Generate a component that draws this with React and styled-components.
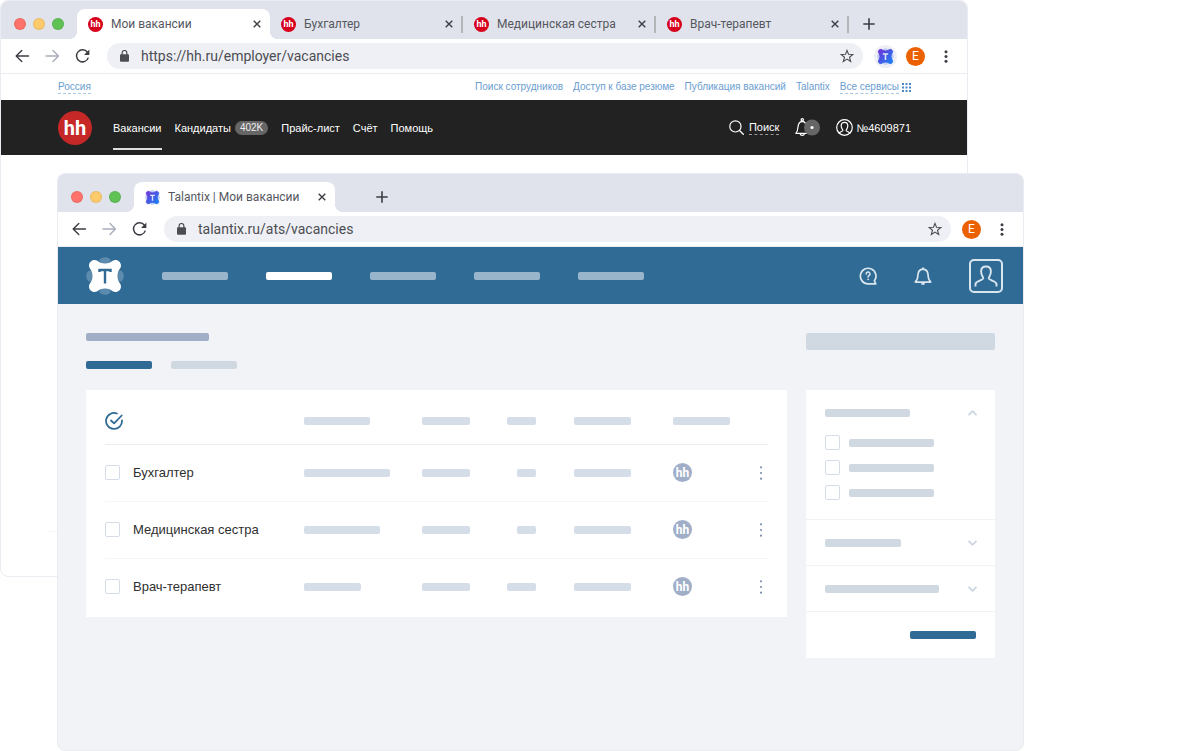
import React from "react";
import styled, { createGlobalStyle, css } from "styled-components";

const GlobalStyle = createGlobalStyle`
  *, *::before, *::after { box-sizing: border-box; }
  body { margin: 0; background: #fff; font-family: Roboto, "Liberation Sans", sans-serif; }
  button { border: 0; padding: 0; background: none; font: inherit; color: inherit; cursor: pointer; }
  a { color: inherit; text-decoration: none; }
  svg { display: block; }
`;

const Desktop = styled.div`
  display: grid;
  grid-template-columns: minmax(0, 1fr);
  min-height: 100vh;
`;

const Window = styled.section`
  grid-area: 1 / 1;
  display: flex;
  flex-direction: column;
  border: 1px solid #ebecf1;
  border-radius: 8px;
  background: ${(p) => p.$tint || "#fff"};
  overflow: hidden;
`;

const BackWindow = styled(Window)`
  align-self: start;
  margin-right: 232px;
  min-height: 577px;
`;

const FrontWindow = styled(Window)`
  margin: 173px 176px 0 57px;
`;

/* Browser chrome */

const TabStrip = styled.div`
  display: flex;
  align-items: flex-end;
  height: 38px;
  padding-left: 13px;
  background: #e0e3eb;
`;

const Lights = styled.div`
  display: flex;
  flex: none;
  align-items: center;
  gap: 7px;
  height: 30px;
  margin-right: 13px;
`;

const Light = styled.button`
  width: 12px;
  height: 12px;
  border-radius: 50%;
  border: 1px solid rgba(0, 0, 0, 0.08);
  background: ${(p) => p.$color};
`;

const Tab = styled.div`
  position: relative;
  display: flex;
  align-items: center;
  flex: 0 1 ${(p) => p.$width || 193}px;
  min-width: 0;
  height: 30px;
  padding-left: 11px;
  color: #55585f;
  ${(p) =>
    p.$active &&
    css`
      padding-right: 9px;
      border-radius: 8px 8px 0 0;
      background: #fff;
      &::before,
      &::after {
        content: "";
        position: absolute;
        bottom: 0;
        width: 8px;
        height: 8px;
      }
      &::before {
        right: 100%;
        background: radial-gradient(circle at 0 0, transparent 8px, #fff 8px);
      }
      &::after {
        left: 100%;
        background: radial-gradient(circle at 100% 0, transparent 8px, #fff 8px);
      }
    `}
`;

const TabTitle = styled.button`
  flex: 1;
  min-width: 0;
  margin-left: 8px;
  overflow: hidden;
  text-align: left;
  font-size: 12px;
  line-height: 18px;
  white-space: nowrap;
`;

const TabDivider = styled.span`
  flex: none;
  width: 2px;
  height: 17px;
  margin-left: 8px;
  background: #b4b5b9;
`;

const NewTab = styled.button`
  display: flex;
  align-items: center;
  height: 30px;
  margin-left: ${(p) => p.$gap}px;
`;

const Toolbar = styled.div`
  display: flex;
  align-items: center;
  height: 35px;
  padding: 0 19px 0 14px;
  border-bottom: 1px solid #ebecf0;
  background: #fff;
`;

const NavButtons = styled.div`
  display: flex;
  gap: 15px;
  margin-right: 17px;
`;

const Address = styled.div`
  display: flex;
  flex: 1;
  align-items: center;
  min-width: 0;
  height: 26px;
  padding: 0 9px 0 13px;
  border-radius: 13px;
  background: #eff0f5;
`;

const AddressInput = styled.input`
  flex: 1;
  min-width: 0;
  padding: 0;
  margin-left: 12px;
  border: 0;
  outline: 0;
  background: none;
  color: #4b4d52;
  font: 14px/20px Roboto, "Liberation Sans", sans-serif;
`;

const Actions = styled.div`
  display: flex;
  align-items: center;
  gap: 9px;
  margin-left: 11px;
`;

const Extension = styled.button`
  display: flex;
  align-items: center;
  justify-content: center;
  width: 23px;
  height: 23px;
  border-radius: 50%;
  background: #eff0f5;
`;

const Avatar = styled.button`
  width: 19px;
  height: 19px;
  border-radius: 50%;
  background: #eb6100;
  color: #fff;
  font-size: 12px;
  line-height: 19px;
  text-align: center;
`;

const MoreButton = styled.button`
  margin-left: 10px;
`;

const HhBadge = styled.span`
  display: flex;
  flex: none;
  align-items: center;
  justify-content: center;
  width: ${(p) => p.$size}px;
  height: ${(p) => p.$size}px;
  border-radius: 50%;
  background: ${(p) => p.$color};
  color: #fff;
  font-family: Roboto, "Liberation Sans", sans-serif;
  font-weight: 700;
  font-size: ${(p) => p.$font}px;
  line-height: 1;
`;

/* hh.ru page */

const ServiceLinks = styled.nav`
  display: flex;
  align-items: center;
  gap: 10px;
  height: 26px;
  padding: 0 56px 0 57px;
  color: #6b9dd0;
  font-family: "Liberation Sans", Arial, sans-serif;
  font-size: 10px;
  line-height: 12px;
`;

const ServiceLink = styled.a`
  white-space: nowrap;
  ${(p) => p.$dashed && "border-bottom: 1px dashed #a9c8e6;"}
  ${(p) => p.$first && "margin-right: auto;"}
`;

const AllServices = styled.span`
  display: flex;
  align-items: center;
  gap: 3px;
`;

const HhHeader = styled.header`
  display: flex;
  align-items: center;
  height: 55px;
  padding: 0 56px 0 57px;
  background: #222;
  color: #fff;
  font-family: "Liberation Sans", Arial, sans-serif;
  font-size: 11px;
  line-height: 14px;
`;

const HhNav = styled.nav`
  display: flex;
  align-items: stretch;
  gap: 13px;
  height: 45px;
  margin-left: 21px;
`;

const HhNavLink = styled.a`
  display: flex;
  align-items: center;
  gap: 4px;
  border: solid transparent;
  border-width: 2px 0;
  white-space: nowrap;
  ${(p) => p.$active && "border-bottom-color: #ddd;"}
`;

const Count = styled.span`
  padding: 0 5px;
  border-radius: 7px;
  background: #666;
  color: #eee;
  font-size: 10px;
`;

const HhTools = styled.div`
  display: flex;
  align-items: center;
  gap: 16px;
  margin-left: auto;
`;

const HhTool = styled.a`
  display: flex;
  align-items: center;
  gap: ${(p) => p.$gap}px;
  white-space: nowrap;
`;

const Dashed = styled.span`
  border-bottom: 1px dashed #999;
`;

const HhBody = styled.main`
  display: flex;
  flex: 1;
  flex-direction: column;
  justify-content: flex-end;
  padding: 0 48px;
`;

const HhFooter = styled.footer`
  height: 45px;
  border-top: 1px solid #f3f3f5;
`;

/* Talantix page */

const TxHeader = styled.header`
  display: flex;
  align-items: center;
  height: 57px;
  padding: 0 20px 0 28px;
  background: #306b95;
  color: #d9e6ef;
`;

const TxNav = styled.nav`
  display: flex;
  gap: 38px;
  margin-left: 38px;
`;

const TxTools = styled.div`
  display: flex;
  align-items: center;
  gap: 37px;
  margin-left: auto;
`;

const UserBox = styled.button`
  display: flex;
  align-items: center;
  justify-content: center;
  width: 34px;
  height: 34px;
  border: 2px solid #d9e6ef;
  border-radius: 5px;
`;

const Bar = styled.span`
  display: block;
  width: ${(p) => p.$w}px;
  max-width: 100%;
  height: 8px;
  border-radius: 2px;
  background: ${(p) => p.$color || "#d0d8e2"};
`;

const TxBody = styled.main`
  display: flex;
  gap: 19px;
  padding: 29px 28px;
`;

const MainColumn = styled.div`
  flex: 1;
  min-width: 0;
`;

const SubTabs = styled.nav`
  display: flex;
  gap: 19px;
  margin: 20px 0 21px;
`;

const TableCard = styled.div`
  padding: 0 19px 2px;
  background: #fff;
`;

const Table = styled.table`
  width: 100%;
  table-layout: fixed;
  border-collapse: collapse;
  color: #303030;
  font-family: "Liberation Sans", Arial, sans-serif;
  font-size: 13px;
  line-height: 18px;
  text-align: left;
`;

const HeadRow = styled.tr`
  height: 54px;
  border-bottom: 1px solid #eaecf1;
  th { padding: 9px 0 0; }
`;

const CheckAllButton = styled.button`
  display: block;
`;

const Row = styled.tr`
  height: 57px;
  & + & { border-top: 1px solid #f4f5f8; }
  td, th { padding: 0; font-weight: 400; white-space: nowrap; }
`;

const RightBar = styled(Bar)`
  margin-left: auto;
  margin-right: 38px;
`;

const Checkbox = styled.input`
  display: block;
  appearance: none;
  width: 15px;
  height: 15px;
  margin: 0;
  border: 1px solid #d5dce8;
  border-radius: 2px;
  background: #fff;
`;

const RowMenu = styled.button`
  display: block;
  margin: 0 auto;
`;

const SideColumn = styled.aside`
  flex: none;
  width: 189px;
`;

const SearchStub = styled.div`
  height: 17px;
  margin-bottom: 40px;
  border-radius: 2px;
  background: #d0d8e2;
`;

const Filters = styled.div`
  background: #fff;
`;

const FilterGroup = styled.section`
  & + & { border-top: 1px solid #f1f3f6; }
`;

const FilterHead = styled.button`
  display: flex;
  align-items: center;
  justify-content: space-between;
  width: 100%;
  height: 45px;
  padding: 0 18px 0 19px;
`;

const Options = styled.div`
  display: grid;
  gap: 10px;
  padding: 0 19px 19px;
`;

const Option = styled.label`
  display: flex;
  align-items: center;
  gap: 9px;
`;

const FilterFooter = styled(FilterGroup)`
  display: flex;
  align-items: center;
  justify-content: flex-end;
  height: 47px;
  padding: 0 19px;
  border-top: 1px solid #f1f3f6;
`;

/* Icons */

const stroke = (width = 1.5) => ({
  fill: "none",
  stroke: "currentColor",
  strokeWidth: width,
  strokeLinecap: "round",
  strokeLinejoin: "round",
});

const Arrow = ({ forward }) => (
  <svg width="15" height="14" viewBox="0 0 15 14" color={forward ? "#a9adb8" : "#3c3e44"}>
    <path {...stroke(1.4)} d={forward ? "M1 7H13M8 1.5L13.4 7L8 12.5" : "M13.5 7H1.5M6.8 1.5L1.2 7L6.8 12.5"} />
  </svg>
);

const Reload = () => (
  <svg width="15" height="14" viewBox="0 0 15 14" color="#3c3e44">
    <path {...stroke()} strokeLinecap="butt" d="M12.4 3.3A6 6 0 1 0 13.3 8.6" />
    <path fill="currentColor" d="M14.4 0.6V6H9Z" />
  </svg>
);

const Lock = () => (
  <svg width="9" height="12" viewBox="0 0 9 12">
    <rect y="4.2" width="9" height="7.5" rx="1" fill="#4b4d52" />
    <path d="M2.1 5V2.9a2.4 2.4 0 0 1 4.8 0V5" fill="none" stroke="#4b4d52" strokeWidth="1.2" />
  </svg>
);

const Star = () => (
  <svg width="14" height="14" viewBox="0 0 14 14" color="#4b4d52">
    <path
      {...stroke(1.1)}
      strokeLinejoin="miter"
      d="M7 1.4L8.5 5.2L12.9 5.5L9.5 8.2L10.700 12.500L7 10.100L3.300 12.500L4.500 8.200L1.100 5.500L5.500 5.200Z"
    />
  </svg>
);

const Close = () => (
  <svg width="8" height="8" viewBox="0 0 8 8" color="#3c3e44">
    <path {...stroke(1.4)} strokeLinecap="butt" d="M0.7 0.7L7.3 7.3M7.3 0.7L0.7 7.3" />
  </svg>
);

const Plus = () => (
  <svg width="12" height="12" viewBox="0 0 12 12" color="#3c3e44">
    <path {...stroke(1.6)} strokeLinecap="butt" d="M6 0.300V11.700M0.300 6H11.700" />
  </svg>
);

const Dots = () => (
  <svg width="4" height="13" viewBox="0 0 4 13" fill="#3c3e44">
    <circle cx="2" cy="1.7" r="1.5" />
    <circle cx="2" cy="6.5" r="1.5" />
    <circle cx="2" cy="11.3" r="1.5" />
  </svg>
);

const RowDots = () => (
  <svg width="4" height="14" viewBox="0 0 4 14" fill="#7f90b0">
    <circle cx="2" cy="1.3" r="1.1" />
    <circle cx="2" cy="7" r="1.1" />
    <circle cx="2" cy="12.7" r="1.1" />
  </svg>
);

const BLOB =
  "M3 8.5C3 5.5 5.500 3 8.500 3C12 3 13 6.500 19 6.500C25 6.500 26 3 29.500 3C32.500 3 35 5.500 35 8.500C35 12 31.500 13 31.500 19C31.500 25 35 26 35 29.500C35 32.500 32.500 35 29.500 35C26 35 25 31.500 19 31.500C13 31.500 12 35 8.500 35C5.500 35 3 32.500 3 29.500C3 26 6.500 25 6.500 19C6.500 13 3 12 3 8.500Z";

const TxMark = ({ size, small }) => (
  <svg width={size} height={size} viewBox="0 0 38 38">
    <defs>
      <linearGradient id="mark" x1="0" y1="0" x2="1" y2="1">
        <stop offset="0.1" stopColor="#6a3ad8" />
        <stop offset="0.9" stopColor="#1f7bf2" />
      </linearGradient>
    </defs>
    <g fill={small ? "#c3cff7" : "#5c8bad"}>
      <ellipse cx="19" cy="3.5" rx="5.5" ry="3.2" />
      <ellipse cx="19" cy="34.5" rx="5.500" ry="3.200" />
      <ellipse cx="3.500" cy="19" rx="3.200" ry="5.500" />
      <ellipse cx="34.500" cy="19" rx="3.200" ry="5.500" />
    </g>
    <path
      d={BLOB}
      fill={small ? "url(#mark)" : "#fff"}
      stroke={small ? "url(#mark)" : "none"}
      strokeWidth="2"
    />
    <path
      d={small ? "M13 13.500H25M19 13.500V27" : "M13.500 15V13H24.500V15M19 13V26.500"}
      fill="none"
      stroke={small ? "#dfe5ff" : "#306b95"}
      strokeWidth={small ? 3.5 : 2.4}
    />
  </svg>
);

const ServicesGrid = () => (
  <svg width="9" height="9" viewBox="0 0 9 9" fill="#4a86c4">
    {[0, 3.5, 7].map((y) => [0, 3.5, 7].map((x) => <rect key={`${x}-${y}`} x={x} y={y} width="2" height="2" />))}
  </svg>
);

const Search = () => (
  <svg width="15" height="15" viewBox="0 0 15 15">
    <circle {...stroke(1.2)} cx="6.4" cy="6.4" r="5.6" />
    <path {...stroke(1.3)} d="M10.5 10.500L14.300 14.300" />
  </svg>
);

const HhBell = () => (
  <svg width="25" height="19" viewBox="0 0 25 19">
    <g {...stroke(1.2)}>
      <circle cx="7.3" cy="1.8" r="1.2" />
      <path d="M0.8 15.300C2.600 13.500 2.800 12 3 9C3.300 5 5 3.500 7.300 3.300C9.600 3.500 11.200 5 11.500 9C11.700 12 11.900 13.500 12.500 15.300Z" />
      <path d="M5 15.600A2.300 2.300 0 0 0 9.500 15.600" />
    </g>
    <circle cx="17" cy="9.5" r="8" fill="#666" />
    <circle cx="17" cy="9.5" r="1.6" fill="#fff" />
  </svg>
);

const HhUser = () => (
  <svg width="17" height="17" viewBox="0 0 17 17">
    <g {...stroke(1.2)}>
      <circle cx="8.5" cy="8.5" r="7.8" />
      <path d="M3.200 14.200C3.700 12.600 6.800 12.500 6.900 11.500C7 10.800 5.200 9.500 5.200 6.700C5.200 4.500 6.500 3.300 8.500 3.300C10.500 3.300 11.800 4.500 11.800 6.700C11.800 9.500 10 10.800 10.100 11.500C10.200 12.500 13.300 12.600 13.800 14.200" />
    </g>
  </svg>
);

const Help = () => (
  <svg width="18" height="18" viewBox="0 0 18 18">
    <path {...stroke(1.7)} d="M16.700 16.900L15.400 13.800A7.800 7.800 0 1 0 9 16.900Z" />
    <path {...stroke(1.5)} d="M7.200 7A1.900 1.900 0 1 1 10 8.500C9.300 8.900 9.100 9.200 9.100 10" />
    <circle cx="9.1" cy="12.3" r="0.9" fill="currentColor" />
  </svg>
);

const TxBell = () => (
  <svg width="18" height="18" viewBox="0 0 18 18">
    <path {...stroke(1.7)} d="M1.500 15.200V14.500C3.300 13.300 3.700 11.500 3.900 8C4.100 4.500 6 2.300 9 2.100C12 2.300 13.900 4.500 14.100 8C14.300 11.500 14.700 13.300 16.500 14.500V15.200Z" />
    <path {...stroke(1.8)} d="M9 1.100V2M8 16.800H10" />
  </svg>
);

const TxUser = () => (
  <svg width="24" height="22" viewBox="0 0 24 22">
    <path
      {...stroke(1.9)}
      strokeLinecap="butt"
      d="M1.500 21.500V18.800C1.800 16 8.600 15.500 9.200 13.500C9.500 12 7.100 10.700 7.100 6.400C7.100 3.300 9 1.500 12 1.500C15 1.500 16.900 3.300 16.900 6.400C16.900 10.700 14.500 12 14.800 13.500C15.400 15.500 22.200 16 22.500 18.800V21.500"
    />
  </svg>
);

const CheckAll = () => (
  <svg width="18" height="18" viewBox="0 0 18 18" color="#306b95">
    <path {...stroke(1.8)} d="M11.900 1.500A8 8 0 1 0 17 8.300" />
    <path {...stroke(1.8)} d="M6 8.500L9.100 11.400L16.700 3.500" />
  </svg>
);

const Chevron = ({ up }) => (
  <svg width="9" height="6" viewBox="0 0 9 6" color="#cbd4e0">
    <path {...stroke(1.7)} strokeLinecap="butt" d={up ? "M0.500 5.200L4.500 1.200L8.500 5.200" : "M0.500 0.800L4.500 4.800L8.500 0.800"} />
  </svg>
);

/* Shared chrome pieces */

const WindowLights = () => (
  <Lights>
    <Light $color="#ff736a" aria-label="Закрыть окно" />
    <Light $color="#fecb6c" aria-label="Свернуть окно" />
    <Light $color="#60c255" aria-label="Развернуть окно" />
  </Lights>
);

const BrowserToolbar = ({ url, extension }) => (
  <Toolbar>
    <NavButtons>
      <button aria-label="Назад"><Arrow /></button>
      <button aria-label="Вперёд"><Arrow forward /></button>
      <button aria-label="Обновить"><Reload /></button>
    </NavButtons>
    <Address>
      <Lock />
      <AddressInput aria-label="Адрес" defaultValue={url} />
      <button aria-label="В закладки"><Star /></button>
    </Address>
    <Actions>
      {extension && <Extension aria-label="Talantix"><TxMark size={17} small /></Extension>}
      <Avatar>E</Avatar>
      <MoreButton aria-label="Меню"><Dots /></MoreButton>
    </Actions>
  </Toolbar>
);

const TABS = ["Мои вакансии", "Бухгалтер", "Медицинская сестра", "Врач-терапевт"];

const ROWS = [
  { name: "Бухгалтер", a: 86, c: 19 },
  { name: "Медицинская сестра", a: 76, c: 19 },
  { name: "Врач-терапевт", a: 57, c: 29 },
];

const COLUMNS = [28, 171, 118, 85, 67, 99, 81, 14];
const CELL = "#d5dde9";

const HhWindow = () => (
  <BackWindow>
    <TabStrip>
      <WindowLights />
      {TABS.map((title, i) => (
        <Tab key={title} $active={i === 0}>
          <HhBadge $size={15} $font={9} $color="#d6001c">hh</HhBadge>
          <TabTitle>{title}</TabTitle>
          <button aria-label="Закрыть вкладку"><Close /></button>
          {i > 0 && <TabDivider />}
        </Tab>
      ))}
      <NewTab $gap={14} aria-label="Новая вкладка"><Plus /></NewTab>
    </TabStrip>
    <BrowserToolbar url="https://hh.ru/employer/vacancies" extension />
    <ServiceLinks>
      <ServiceLink href="#region" $dashed $first>Россия</ServiceLink>
      <ServiceLink href="#search">Поиск сотрудников</ServiceLink>
      <ServiceLink href="#resumes">Доступ к базе резюме</ServiceLink>
      <ServiceLink href="#publish">Публикация вакансий</ServiceLink>
      <ServiceLink href="#talantix">Talantix</ServiceLink>
      <AllServices>
        <ServiceLink href="#services" $dashed>Все сервисы</ServiceLink>
        <ServicesGrid />
      </AllServices>
    </ServiceLinks>
    <HhHeader>
      <HhBadge $size={34} $font={20} $color="#c62828">hh</HhBadge>
      <HhNav>
        <HhNavLink href="#vacancies" $active>Вакансии</HhNavLink>
        <HhNavLink href="#candidates">Кандидаты <Count>402K</Count></HhNavLink>
        <HhNavLink href="#prices">Прайс-лист</HhNavLink>
        <HhNavLink href="#account">Счёт</HhNavLink>
        <HhNavLink href="#help">Помощь</HhNavLink>
      </HhNav>
      <HhTools>
        <HhTool href="#find" $gap={5}><Search /><Dashed>Поиск</Dashed></HhTool>
        <HhTool href="#notices" aria-label="Уведомления"><HhBell /></HhTool>
        <HhTool href="#profile" $gap={3}><HhUser />№4609871</HhTool>
      </HhTools>
    </HhHeader>
    <HhBody>
      <HhFooter />
    </HhBody>
  </BackWindow>
);

const TalantixWindow = () => (
  <FrontWindow $tint="#f2f3f7">
    <TabStrip>
      <WindowLights />
      <Tab $active $width={201}>
        <TxMark size={15} small />
        <TabTitle>Talantix | Мои вакансии</TabTitle>
        <button aria-label="Закрыть вкладку"><Close /></button>
      </Tab>
      <NewTab $gap={41} aria-label="Новая вкладка"><Plus /></NewTab>
    </TabStrip>
    <BrowserToolbar url="talantix.ru/ats/vacancies" />
    <TxHeader>
      <TxMark size={38} />
      <TxNav>
        {[0, 1, 2, 3, 4].map((i) => (
          <a key={i} href={`#section-${i}`} aria-label={`Раздел ${i + 1}`}>
            <Bar $w={66} $color={i === 1 ? "#fff" : "#98b5ca"} />
          </a>
        ))}
      </TxNav>
      <TxTools>
        <button aria-label="Справка"><Help /></button>
        <button aria-label="Уведомления"><TxBell /></button>
        <UserBox aria-label="Профиль"><TxUser /></UserBox>
      </TxTools>
    </TxHeader>
    <TxBody>
      <MainColumn>
        <Bar $w={123} $color="#a0aec8" />
        <SubTabs>
          <a href="#active" aria-label="Активные"><Bar $w={66} $color="#306b95" /></a>
          <a href="#archive" aria-label="Архив"><Bar $w={66} /></a>
        </SubTabs>
        <TableCard>
          <Table>
            <colgroup>
              {COLUMNS.map((w, i) => <col key={i} width={w} />)}
            </colgroup>
            <thead>
              <HeadRow>
                <th><CheckAllButton aria-label="Выбрать все"><CheckAll /></CheckAllButton></th>
                <th />
                <th><Bar $w={66} $color={CELL} /></th>
                <th><Bar $w={48} $color={CELL} /></th>
                <th><RightBar $w={29} $color={CELL} /></th>
                <th><Bar $w={57} $color={CELL} /></th>
                <th><Bar $w={57} $color={CELL} /></th>
                <th />
              </HeadRow>
            </thead>
            <tbody>
              {ROWS.map((row, i) => (
                <Row key={row.name}>
                  <td><Checkbox type="checkbox" id={`row-${i}`} /></td>
                  <th scope="row"><label htmlFor={`row-${i}`}>{row.name}</label></th>
                  <td><Bar $w={row.a} $color={CELL} /></td>
                  <td><Bar $w={48} $color={CELL} /></td>
                  <td><RightBar $w={row.c} $color={CELL} /></td>
                  <td><Bar $w={57} $color={CELL} /></td>
                  <td><HhBadge $size={19} $font={12} $color="#a0aec8">hh</HhBadge></td>
                  <td><RowMenu aria-label="Действия"><RowDots /></RowMenu></td>
                </Row>
              ))}
            </tbody>
          </Table>
        </TableCard>
      </MainColumn>
      <SideColumn>
        <SearchStub />
        <Filters>
          <FilterGroup>
            <FilterHead aria-label="Фильтр 1"><Bar $w={85} /><Chevron up /></FilterHead>
            <Options>
              {[1, 2, 3].map((n) => (
                <Option key={n}>
                  <Checkbox type="checkbox" aria-label={`Вариант ${n}`} />
                  <Bar $w={85} />
                </Option>
              ))}
            </Options>
          </FilterGroup>
          <FilterGroup>
            <FilterHead aria-label="Фильтр 2"><Bar $w={76} /><Chevron /></FilterHead>
          </FilterGroup>
          <FilterGroup>
            <FilterHead aria-label="Фильтр 3"><Bar $w={114} /><Chevron /></FilterHead>
          </FilterGroup>
          <FilterFooter>
            <button aria-label="Применить"><Bar $w={66} $color="#306b95" /></button>
          </FilterFooter>
        </Filters>
      </SideColumn>
    </TxBody>
  </FrontWindow>
);

export default function App() {
  return (
    <>
      <GlobalStyle />
      <Desktop>
        <HhWindow />
        <TalantixWindow />
      </Desktop>
    </>
  );
}
